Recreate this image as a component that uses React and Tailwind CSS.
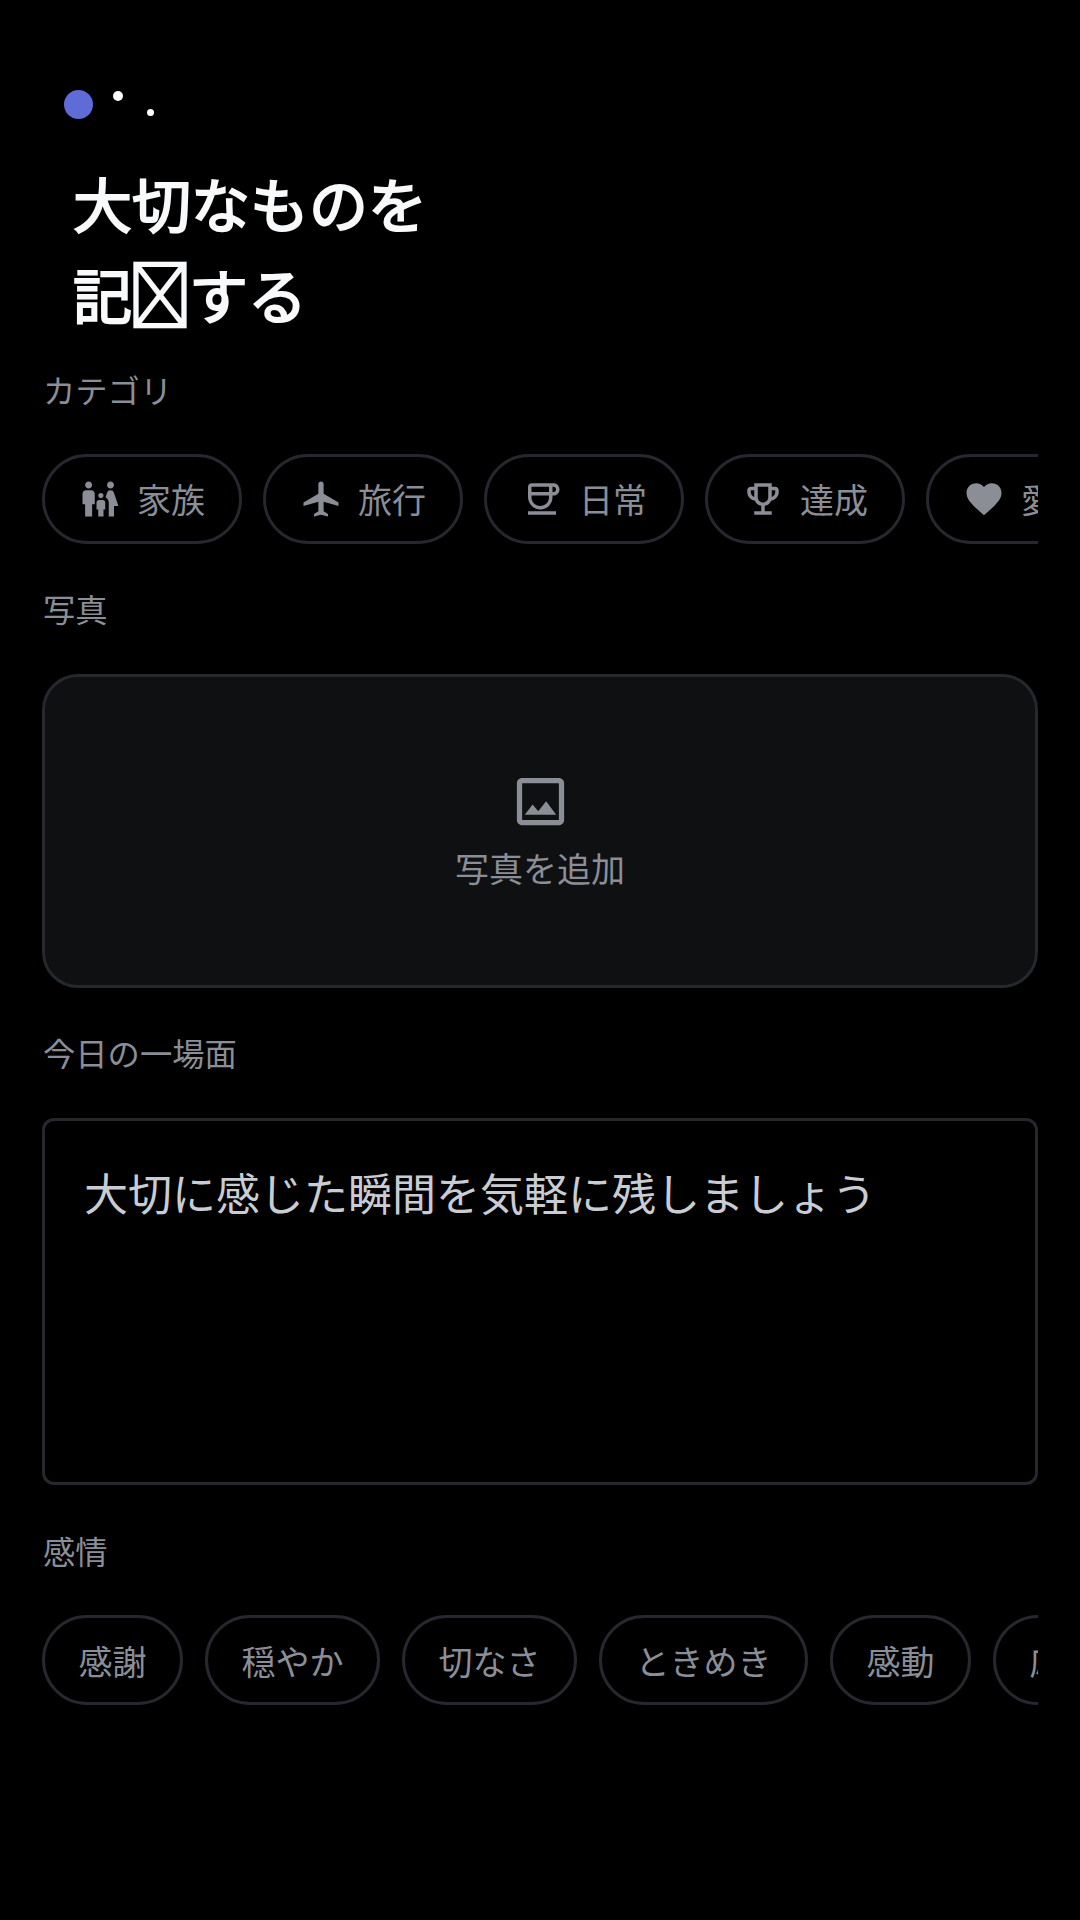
import React from 'react';
import {
  MdFamilyRestroom,
  MdAirplanemodeActive,
  MdOutlineCoffee,
  MdOutlineEmojiEvents,
  MdFavorite,
  MdOutlineImage,
} from 'react-icons/md';

const categories = [
  { icon: MdFamilyRestroom, label: '家族' },
  { icon: MdAirplanemodeActive, label: '旅行' },
  { icon: MdOutlineCoffee, label: '日常' },
  { icon: MdOutlineEmojiEvents, label: '達成' },
  { icon: MdFavorite, label: '愛情' },
];

const emotions = ['感謝', '穏やか', '切なさ', 'ときめき', '感動', '応援'];

function Label({ children, className }) {
  return <div className={`text-[32.3px] leading-[40px] text-[#8b8e96] ${className}`}>{children}</div>;
}

export default function App() {
  return (
    <div className="w-[1080px] h-[1920px] bg-black overflow-hidden font-['Noto_Sans_CJK_JP','Noto_Sans',sans-serif]">
      <div className="relative h-[90px]">
        <span className="absolute left-[64px] top-[90px] w-[29px] h-[29px] rounded-full bg-[#5f6bd6]" />
        <span className="absolute left-[113px] top-[91px] w-[10px] h-[10px] rounded-full bg-white" />
        <span className="absolute left-[147px] top-[109px] w-[7px] h-[7px] rounded-full bg-white" />
      </div>
      <h1 className="mt-[68px] ml-[73px] text-[59px] leading-[89px] font-normal text-[#f8f9fa] [-webkit-text-stroke:2px_#f8f9fa]">
        <div>大切なものを</div>
        <div>記<span className="text-[64px] -ml-[4px] -mr-[3px]">{'\uE000'}</span>する</div>
      </h1>

      <div className="px-[42px]">
        <Label className="mt-[31px] ml-[1px]">カテゴリ</Label>
        <div className="mt-[45px] flex gap-[21px] overflow-hidden">
          {categories.map(({ icon: Icon, label }) => (
            <div key={label} className="shrink-0 w-[200px] h-[90px] rounded-full border-[3px] border-[#26282e] flex items-center justify-center gap-[16px] text-[#8b8e96]">
              <Icon className="w-[42px] h-[42px]" />
              <span className="text-[34px] leading-none">{label}</span>
            </div>
          ))}
        </div>

        <Label className="mt-[44px] ml-[1px]">写真</Label>
        <div className="mt-[46px] h-[314px] rounded-[36px] border-[3px] border-[#26282e] bg-[#0e1012] flex flex-col items-center justify-center text-[#8b8e96]">
          <MdOutlineImage className="w-[63px] h-[63px]" />
          <span className="mt-[11px] text-[34px] leading-[48px]">写真を追加</span>
        </div>

        <Label className="mt-[44px] ml-[1px]">今日の一場面</Label>
        <div className="mt-[46px] h-[367px] rounded-[12px] border-[3px] border-[#26282e] px-[39px] py-[39px]">
          <p className="text-[44px] leading-[64px] text-[#c9ccd2]">大切に感じた瞬間を気軽に残しましょう</p>
        </div>

        <Label className="mt-[45px] ml-[1px]">感情</Label>
        <div className="mt-[45px] flex gap-[22px] overflow-hidden">
          {emotions.map((label) => (
            <div key={label} className="shrink-0 h-[90px] px-[33.5px] rounded-full border-[3px] border-[#26282e] flex items-center text-[34px] text-[#8b8e96]">
              {label}
            </div>
          ))}
        </div>
      </div>
    </div>
  );
}
